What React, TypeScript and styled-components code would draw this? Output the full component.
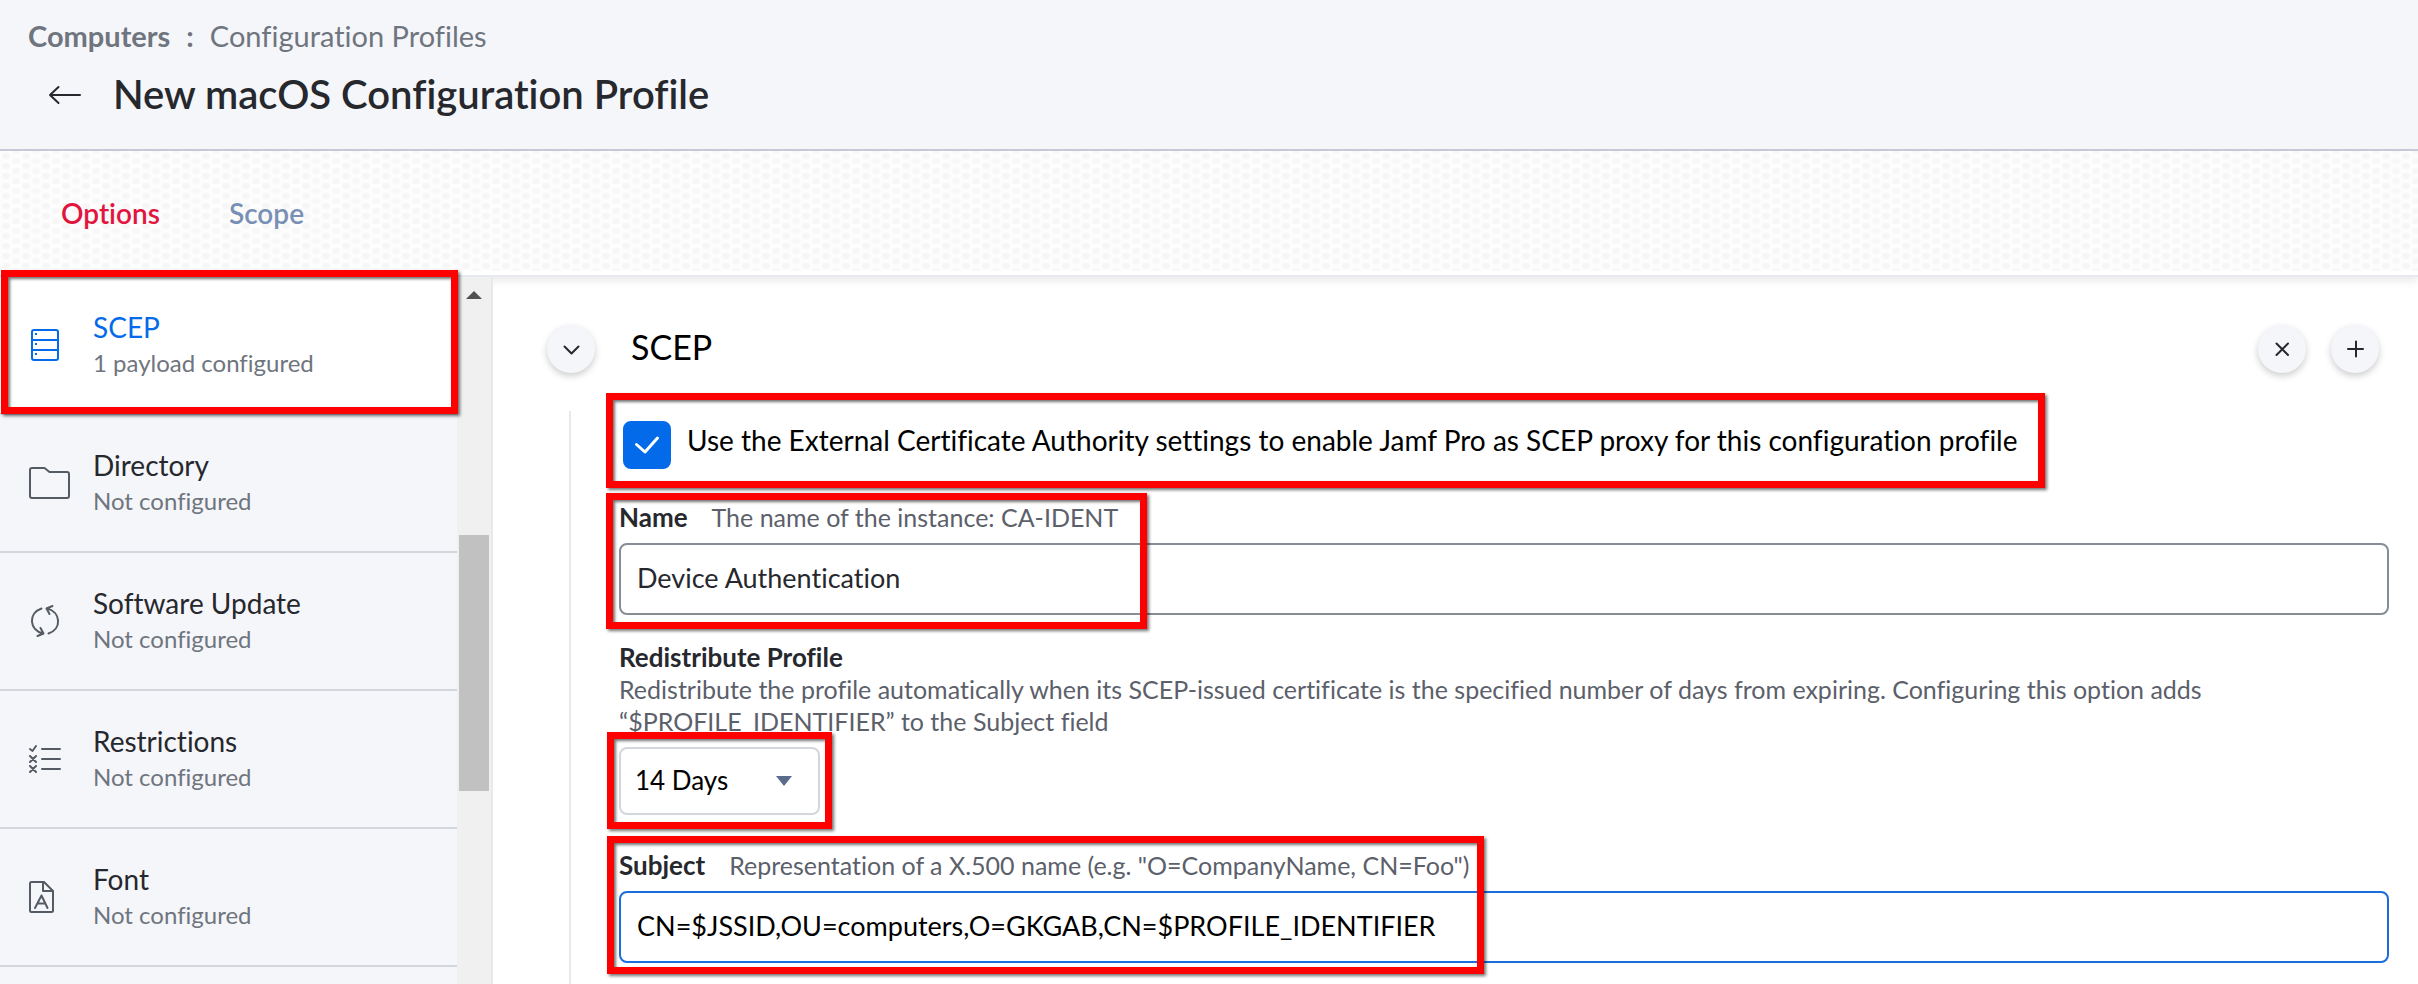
import React, { useId, useState } from "react";
import styled, { createGlobalStyle, css } from "styled-components";

const color = {
  ink: "#26282d",
  muted: "#6f757e",
  hint: "#5b606a",
  blue: "#036be9",
  red: "#e0163f",
  panel: "#f5f6fa",
  rule: "#d3d6dc",
  line: "#e6e9ee",
};

const GlobalStyle = createGlobalStyle`
  *, *::before, *::after { box-sizing: border-box; }
  body {
    margin: 0;
    background: #fff;
    color: ${color.ink};
    font-family: Lato, "Open Sans", "Liberation Sans", sans-serif;
    font-variant-ligatures: none;
  }
  button, input, select {
    font-family: inherit;
    font-variant-ligatures: inherit;
    color: inherit;
  }
`;

const Page = styled.div`
  display: flex;
  flex-direction: column;
  height: 100vh;
  overflow: hidden;
`;

const Header = styled.header`
  flex: none;
  padding: 18px 28px 31px;
  background: ${color.panel};
  border-bottom: 2px solid #c9ccd8;
`;

const Breadcrumb = styled.nav`
  display: flex;
  gap: 16px;
  color: ${color.muted};
  font-size: 29px;
  line-height: 36px;
`;

const Crumb = styled.a<{ $strong?: boolean }>`
  color: inherit;
  text-decoration: none;
  font-weight: ${(p) => (p.$strong ? 700 : 400)};
`;

const CrumbSeparator = styled.span`
  font-weight: 700;
`;

const TitleRow = styled.div`
  display: flex;
  align-items: center;
  gap: 31px;
  margin-top: 16px;
  padding-left: 20px;
`;

const BackButton = styled.button`
  display: flex;
  padding: 2px 0 0;
  border: 0;
  background: none;
  cursor: pointer;
`;

const Title = styled.h1`
  margin: 0;
  font-size: 40px;
  line-height: 48px;
  font-weight: 600;
`;

const TabBar = styled.div`
  flex: none;
  border-bottom: 2px solid ${color.line};
  box-shadow: 0 4px 8px rgba(40, 20, 20, 0.09);
  padding-bottom: 4px;
  background: #fff;
`;

const Tabs = styled.div`
  display: flex;
  gap: 69px;
  padding: 44px 61px 40px;
  background-color: #fdfdfd;
  background-image:
    radial-gradient(ellipse 5px 4px at 6px 5px, #f4f4f4, #f8f8f8 70%, transparent),
    radial-gradient(ellipse 5px 4px at 6px 5px, #f6f6f6, #f9f9f9 70%, transparent);
  background-size: 20px 10px;
  background-position: 0 0, 10px 5px;
`;

const Tab = styled.button<{ $active: boolean }>`
  padding: 0;
  border: 0;
  background: none;
  color: ${(p) => (p.$active ? color.red : "#7890b5")};
  font-size: 28px;
  line-height: 36px;
  font-weight: 600;
  cursor: pointer;
`;

const Body = styled.div`
  display: flex;
  flex: 1;
  min-height: 0;
`;

const Sidebar = styled.aside`
  position: relative;
  z-index: 1;
  display: flex;
  flex: none;
  width: 493px;
  background: ${color.panel};
  border-right: 2px solid ${color.line};
`;

const PayloadList = styled.ul`
  margin: 0;
  padding: 0;
  list-style: none;
`;

const ListViewport = styled.div`
  flex: 1;
  overflow: hidden;
`;

const PayloadLink = styled.a<{ $selected?: boolean }>`
  display: grid;
  grid-template-columns: 65px 1fr;
  align-items: center;
  height: 138px;
  padding-left: 28px;
  border-bottom: 2px solid ${color.rule};
  background: ${(p) => (p.$selected ? "#fff" : "transparent")};
  color: ${(p) => (p.$selected ? color.blue : color.ink)};
  text-decoration: none;
`;

const PayloadIcon = styled.span<{ $selected?: boolean }>`
  display: flex;
  color: ${(p) => (p.$selected ? color.blue : "#555b64")};
`;

const PayloadText = styled.span`
  display: flex;
  flex-direction: column;
  line-height: 36px;
`;

const PayloadName = styled.span`
  font-size: 28px;
`;

const PayloadStatus = styled.span`
  color: ${color.muted};
  font-size: 24px;
`;

const ScrollTrack = styled.div`
  display: flex;
  flex-direction: column;
  align-items: center;
  flex: none;
  width: 34px;
  padding-top: 14px;
  background: #f0f0f0;
`;

const ScrollThumb = styled.div`
  width: 30px;
  height: 37%;
  margin-top: 236px;
  background: #c1c1c1;
`;

const Main = styled.main`
  flex: 1;
  min-width: 0;
  padding: 48px 29px 0 54px;
  display: flex;
  flex-direction: column;
`;

const SectionHeader = styled.div`
  display: flex;
  align-items: center;
  padding-right: 10px;
`;

const SectionTitle = styled.h2`
  flex: 1;
  margin: 0 0 0 36px;
  color: #000;
  font-size: 34px;
  line-height: 44px;
  padding-bottom: 4px;
  font-weight: 400;
`;

const SectionActions = styled.div`
  display: flex;
  gap: 25px;
`;

const RoundButton = styled.button`
  display: grid;
  place-items: center;
  width: 48px;
  height: 48px;
  padding: 0;
  border: 0;
  border-radius: 50%;
  background: ${color.panel};
  box-shadow: 0 3px 7px rgba(0, 0, 0, 0.2);
  cursor: pointer;
`;

const Form = styled.form`
  flex: 1;
  margin: 38px 0 0 22px;
  padding: 10px 0 0 48px;
  border-left: 2px solid ${color.line};
`;

const Field = styled.div<{ $gap: number }>`
  position: relative;
  margin-top: ${(p) => p.$gap}px;
`;

const CheckRow = styled.div`
  position: relative;
  display: flex;
  gap: 16px;
  padding-left: 4px;
`;

const CheckBoxCell = styled.span`
  display: grid;
  place-items: center;
  width: 48px;
  height: 48px;
  & > * { grid-area: 1 / 1; }
  & > svg { pointer-events: none; }
`;

const CheckInput = styled.input`
  appearance: none;
  width: 48px;
  height: 48px;
  margin: 0;
  border: 2px solid ${color.blue};
  border-radius: 8px;
  background: #fff;
  &:checked { background: ${color.blue}; }
`;

const CheckLabel = styled.label`
  color: #000;
  font-size: 28px;
  line-height: 38px;
`;

const LabelRow = styled.div`
  display: flex;
  gap: 24px;
  margin-bottom: 10px;
`;

const Label = styled.label`
  font-size: 26px;
  line-height: 32px;
  font-weight: 700;
`;

const BlockLabel = styled(Label)`
  display: block;
`;

const Hint = styled.span`
  color: ${color.hint};
  font-size: 25px;
  line-height: 32px;
`;

const Description = styled.p`
  margin: 0 0 10px;
  color: ${color.hint};
  font-size: 25px;
  line-height: 32px;
`;

const TextInput = styled.input<{ $focused?: boolean }>`
  display: block;
  width: 100%;
  height: 72px;
  padding: 0 16px 3px;
  border: 2px solid ${(p) => (p.$focused ? "#1a6edb" : "#868d95")};
  border-radius: 8px;
  background: #fff;
  color: ${(p) => (p.$focused ? "#000" : color.ink)};
  font-size: 27px;
  outline: none;
`;

const SelectCell = styled.span`
  display: inline-grid;
  align-items: center;
  vertical-align: top;
  width: 201px;
  & > * { grid-area: 1 / 1; }
  & > svg { justify-self: end; margin-right: 28px; pointer-events: none; }
`;

const Select = styled.select`
  appearance: none;
  width: 100%;
  height: 68px;
  padding: 0 14px 3px;
  border: 2px solid ${color.rule};
  border-radius: 8px;
  background: #fff;
  color: #000;
  font-size: 26px;
`;

type Box = { $top: number; $left: number; $width: number; $height: number };

/* Red frame that calls attention to the settings underneath it. */
const Highlight = styled.span<Box>`
  position: absolute;
  z-index: 2;
  ${(p) => css`
    top: ${p.$top}px;
    left: ${p.$left}px;
    width: ${p.$width}px;
    height: ${p.$height}px;
  `}
  border: 7px solid #fe0000;
  box-shadow: 2px 2px 3px rgba(0, 0, 0, 0.55), inset 2px 2px 3px rgba(0, 0, 0, 0.55);
  pointer-events: none;
`;

const stroke = {
  fill: "none",
  stroke: "currentColor",
  strokeWidth: 2,
  strokeLinecap: "round" as const,
  strokeLinejoin: "round" as const,
};

const ArrowLeft = () => (
  <svg width="34" height="20" viewBox="0 0 34 20" {...stroke} aria-hidden="true">
    <path d="M32 10H2M10.5 2 2 10l8.5 8" />
  </svg>
);

const ServerIcon = () => (
  <svg width="34" height="34" viewBox="0 0 34 34" {...stroke} aria-hidden="true">
    <rect x="4" y="2" width="26" height="30" rx="2" />
    <path d="M4 12h26M4 22h26" />
    <path d="M7 6h2M7 16h2M7 26h2" strokeLinecap="butt" />
  </svg>
);

const FolderIcon = () => (
  <svg width="44" height="34" viewBox="0 0 44 34" {...stroke} aria-hidden="true">
    <path d="M4 2h12.500l5 4H39q2 0 2 2v22q0 2-2 2H4q-2 0-2-2V4q0-2 2-2Z" />
  </svg>
);

const SyncIcon = () => (
  <svg width="34" height="34" viewBox="0 0 34 34" {...stroke} aria-hidden="true">
    <path d="M13.500 4.500C0 9 1 26 15 29.500M9.500 32l6-2.500L12.500 24" />
    <path d="M20.500 29.500C34 25 33 8 19 4.500M24.500 2l-6 2.500L21.500 10" />
  </svg>
);

const ChecklistIcon = () => (
  <svg width="34" height="34" viewBox="0 0 34 34" {...stroke} aria-hidden="true">
    <path d="M14 7h18M14 17h18M14 27h18" />
    <path d="m2 7 2.500 2L8 4M2 14l6 6M8 14l-6 6M2 24l6 6M8 24l-6 6" />
  </svg>
);

const FontFileIcon = () => (
  <svg width="34" height="34" viewBox="0 0 34 34" {...stroke} aria-hidden="true">
    <path d="M3.500 2H16l9 9v19.500q0 1.500-1.500 1.500h-20Q2 32 2 30.500v-27Q2 2 3.500 2Z" />
    <path d="M15 2v9h9M7 28l6.500-12.500L19.500 28M9.500 23.500h8" />
  </svg>
);

const ChevronIcon = () => (
  <svg width="20" height="20" viewBox="0 0 20 20" {...stroke} aria-hidden="true">
    <path d="m3.500 7.500 7 7 7-7" />
  </svg>
);

const CloseIcon = () => (
  <svg width="20" height="20" viewBox="0 0 20 20" {...stroke} aria-hidden="true">
    <path d="m4.500 4.500 11.500 11.500M16 4.500 4.500 16" />
  </svg>
);

const PlusIcon = () => (
  <svg width="20" height="20" viewBox="0 0 20 20" {...stroke} aria-hidden="true">
    <path d="M3 10h15M11 2.500v15" />
  </svg>
);

const CheckIcon = () => (
  <svg width="48" height="48" viewBox="0 0 48 48" {...stroke} stroke="#fff" strokeWidth="3" aria-hidden="true">
    <path d="m13.500 23.500 8.500 7.500 12.500-14" />
  </svg>
);

const CaretDown = () => (
  <svg width="16" height="10" viewBox="0 0 16 10" fill="#5b6b8c" aria-hidden="true">
    <path d="M0 0h16L8 10Z" />
  </svg>
);

const ScrollUp = () => (
  <svg width="16" height="8" viewBox="0 0 16 8" fill="#505050" aria-hidden="true">
    <path d="M8 0l8 8H0Z" />
  </svg>
);

const payloads = [
  { name: "SCEP", status: "1 payload configured", Icon: ServerIcon, selected: true },
  { name: "Directory", status: "Not configured", Icon: FolderIcon },
  { name: "Software Update", status: "Not configured", Icon: SyncIcon },
  { name: "Restrictions", status: "Not configured", Icon: ChecklistIcon },
  { name: "Font", status: "Not configured", Icon: FontFileIcon },
];

export default function App() {
  const id = useId();
  const [tab, setTab] = useState("Options");
  const [proxy, setProxy] = useState(true);

  return (
    <Page>
      <GlobalStyle />
      <Header>
        <Breadcrumb aria-label="Breadcrumb">
          <Crumb href="#computers" $strong>Computers</Crumb>
          <CrumbSeparator>:</CrumbSeparator>
          <Crumb href="#profiles">Configuration Profiles</Crumb>
        </Breadcrumb>
        <TitleRow>
          <BackButton type="button" aria-label="Back"><ArrowLeft /></BackButton>
          <Title>New macOS Configuration Profile</Title>
        </TitleRow>
      </Header>

      <TabBar>
        <Tabs role="tablist">
          {["Options", "Scope"].map((name) => (
            <Tab key={name} type="button" role="tab" aria-selected={tab === name} $active={tab === name} onClick={() => setTab(name)}>
              {name}
            </Tab>
          ))}
        </Tabs>
      </TabBar>

      <Body>
        <Sidebar>
          <ListViewport>
            <PayloadList>
              {payloads.map(({ name, status, Icon, selected }) => (
                <li key={name}>
                  <PayloadLink href={`#${name}`} $selected={selected}>
                    <PayloadIcon $selected={selected}><Icon /></PayloadIcon>
                    <PayloadText>
                      <PayloadName>{name}</PayloadName>
                      <PayloadStatus>{status}</PayloadStatus>
                    </PayloadText>
                  </PayloadLink>
                </li>
              ))}
            </PayloadList>
          </ListViewport>
          <ScrollTrack>
            <ScrollUp />
            <ScrollThumb />
          </ScrollTrack>
          <Highlight $top={-7} $left={1} $width={457} $height={144} />
        </Sidebar>

        <Main>
          <SectionHeader>
            <RoundButton type="button" aria-label="Collapse"><ChevronIcon /></RoundButton>
            <SectionTitle>SCEP</SectionTitle>
            <SectionActions>
              <RoundButton type="button" aria-label="Remove"><CloseIcon /></RoundButton>
              <RoundButton type="button" aria-label="Add"><PlusIcon /></RoundButton>
            </SectionActions>
          </SectionHeader>

          <Form>
            <CheckRow>
              <CheckBoxCell>
                <CheckInput id={`${id}proxy`} type="checkbox" checked={proxy} onChange={(e) => setProxy(e.target.checked)} />
                {proxy && <CheckIcon />}
              </CheckBoxCell>
              <CheckLabel htmlFor={`${id}proxy`}>
                Use the External Certificate Authority settings to enable Jamf Pro as SCEP proxy for this configuration profile
              </CheckLabel>
              <Highlight $top={-28} $left={-13} $width={1439} $height={95} />
            </CheckRow>

            <Field $gap={32}>
              <LabelRow>
                <Label htmlFor={`${id}name`}>Name</Label>
                <Hint>The name of the instance: CA-IDENT</Hint>
              </LabelRow>
              <TextInput id={`${id}name`} type="text" defaultValue="Device Authentication" />
              <Highlight $top={-8} $left={-13} $width={541} $height={136} />
            </Field>

            <Field $gap={26}>
              <BlockLabel htmlFor={`${id}days`}>Redistribute Profile</BlockLabel>
              <Description>
                Redistribute the profile automatically when its SCEP-issued certificate is the specified number of days
                from expiring. Configuring this option adds “$PROFILE_IDENTIFIER” to the Subject field
              </Description>
              <SelectCell>
                <Select id={`${id}days`} defaultValue="14">
                  <option value="14">14 Days</option>
                </Select>
                <CaretDown />
              </SelectCell>
              <Highlight $top={91} $left={-12} $width={225} $height={97} />
            </Field>

            <Field $gap={34}>
              <LabelRow>
                <Label htmlFor={`${id}subject`}>Subject</Label>
                <Hint>Representation of a X.500 name (e.g. "O=CompanyName, CN=Foo")</Hint>
              </LabelRow>
              <TextInput id={`${id}subject`} type="text" $focused defaultValue="CN=$JSSID,OU=computers,O=GKGAB,CN=$PROFILE_IDENTIFIER" />
              <Highlight $top={-13} $left={-12} $width={877} $height={138} />
            </Field>
          </Form>
        </Main>
      </Body>
    </Page>
  );
}
